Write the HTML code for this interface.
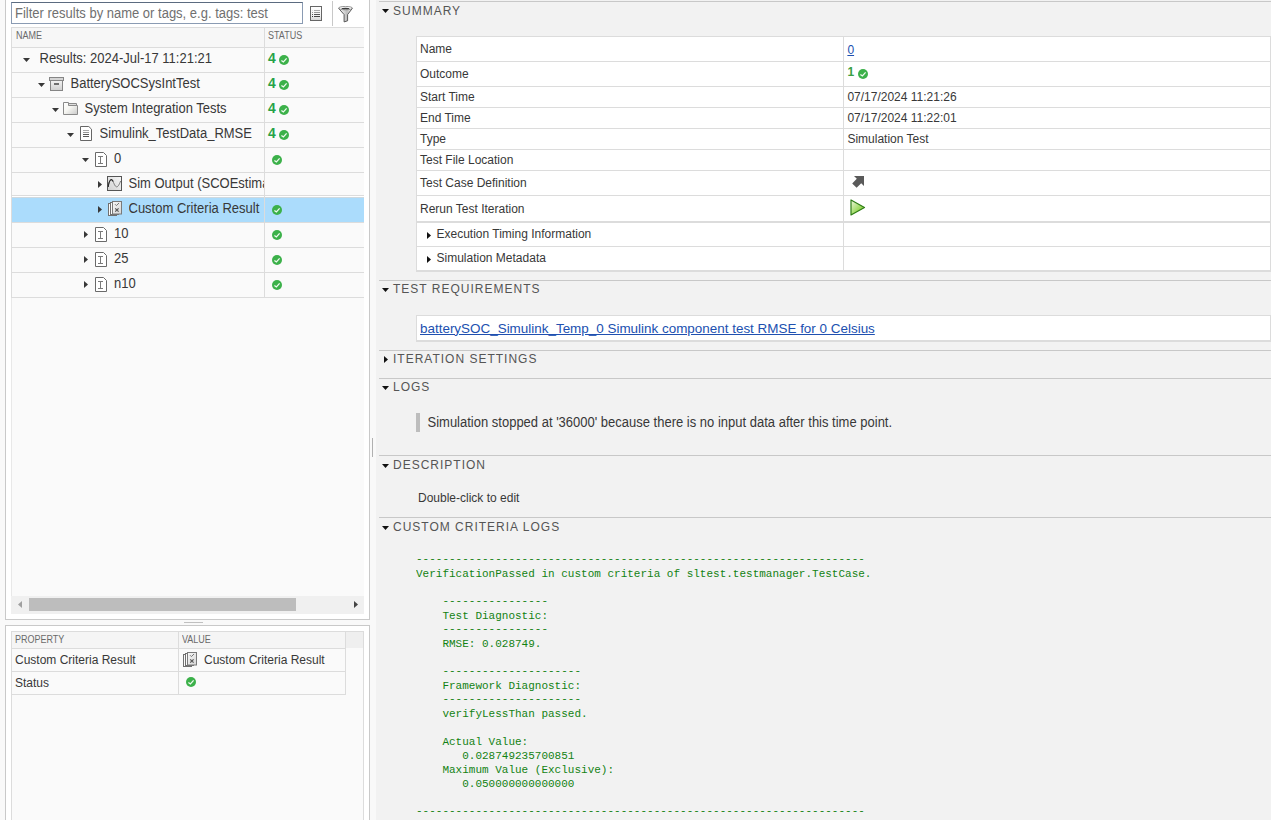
<!DOCTYPE html><html><head><meta charset="utf-8"><style>
html,body{margin:0;padding:0;}
body{width:1271px;height:820px;overflow:hidden;position:relative;background:#f9f9f9;font-family:"Liberation Sans", sans-serif;}
.t{position:absolute;white-space:pre;}
.r{position:absolute;}
</style></head><body>
<div class="r" style="left:5px;top:-1px;width:365px;height:621px;background:#ffffff;box-sizing:border-box;border:1px solid #c9c9c9;"></div>
<div class="r" style="left:11px;top:2px;width:292px;height:22px;background:#ffffff;box-sizing:border-box;border:1px solid #8a9bb3;border-top-color:#5b6b80;"></div>
<div class="t" style="left:15px;top:7.00px;font-size:13px;line-height:13px;color:#707070;font-weight:normal;font-family:'Liberation Sans', sans-serif;transform:scaleY(1.1);transform-origin:0 11.00px;">Filter results by name or tags, e.g. tags: test</div>
<svg class="r" style="left:310px;top:6px" width="12" height="15" viewBox="0 0 12 15"><defs><linearGradient id="lg1" x1="0" y1="0" x2="0" y2="1"><stop offset="0" stop-color="#ffffff"/><stop offset="0.6" stop-color="#f4f4f4"/><stop offset="1" stop-color="#d4d4d4"/></linearGradient></defs><rect x="0.5" y="0.5" width="11" height="14" fill="url(#lg1)" stroke="#666"/><rect x="2" y="4" width="1" height="1" fill="#ddd"/><rect x="4" y="4" width="6" height="1" fill="#aaa"/><rect x="2" y="6" width="1" height="1" fill="#999"/><rect x="4" y="6" width="6" height="1" fill="#999"/><rect x="2" y="8" width="1" height="1" fill="#555"/><rect x="4" y="8" width="6" height="1" fill="#555"/><rect x="2" y="10" width="1" height="1" fill="#333"/><rect x="4" y="10" width="6" height="1" fill="#444"/></svg>
<div class="r" style="left:332px;top:1px;width:1px;height:25px;background:#c8c8c8;"></div>
<svg class="r" style="left:338px;top:6px" width="16" height="17" viewBox="0 0 16 17"><defs><linearGradient id="lg2" x1="0" y1="0" x2="1" y2="0"><stop offset="0" stop-color="#ffffff"/><stop offset="0.35" stop-color="#dcdcdc"/><stop offset="0.6" stop-color="#bdbdbd"/><stop offset="1" stop-color="#f4f4f4"/></linearGradient></defs><path d="M0.7 2.4L6.1 8.6V15.9L9.6 14.8V8.6L14.3 2.4Z" fill="url(#lg2)" stroke="#4a4a4a" stroke-width="0.9" stroke-linejoin="round"/><ellipse cx="7.5" cy="2.1" rx="6.9" ry="1.7" fill="#fdfdfd" stroke="#7a7a7a" stroke-width="0.8"/><ellipse cx="7.5" cy="2.6" rx="4.1" ry="0.75" fill="#3a3a3a"/></svg>
<div class="r" style="left:11px;top:27px;width:353px;height:570px;background:#fafafa;"></div>
<div class="r" style="left:11px;top:27px;width:353px;height:20px;background:#f7f7f7;"></div>
<div class="r" style="left:11px;top:27px;width:353px;height:1px;background:#dcdcdc;"></div>
<div class="r" style="left:11px;top:27px;width:1px;height:270px;background:#dcdcdc;"></div>
<div class="r" style="left:11px;top:297px;width:1px;height:300px;background:#e8e8e8;"></div>
<div class="t" style="left:16px;top:30.93px;font-size:10px;line-height:10px;color:#6a6a6a;font-weight:normal;font-family:'Liberation Sans', sans-serif;transform:scaleX(0.9);transform-origin:0 0;">NAME</div>
<div class="t" style="left:268px;top:30.93px;font-size:10px;line-height:10px;color:#6a6a6a;font-weight:normal;font-family:'Liberation Sans', sans-serif;transform:scaleX(0.9);transform-origin:0 0;">STATUS</div>
<div class="r" style="left:11px;top:47px;width:353px;height:1px;background:#dcdcdc;"></div>
<div class="r" style="left:11px;top:72px;width:353px;height:1px;background:#dcdcdc;"></div>
<div class="r" style="left:11px;top:97px;width:353px;height:1px;background:#dcdcdc;"></div>
<div class="r" style="left:11px;top:122px;width:353px;height:1px;background:#dcdcdc;"></div>
<div class="r" style="left:11px;top:147px;width:353px;height:1px;background:#dcdcdc;"></div>
<div class="r" style="left:11px;top:172px;width:353px;height:1px;background:#dcdcdc;"></div>
<div class="r" style="left:11px;top:195px;width:353px;height:1px;background:#dcdcdc;"></div>
<div class="r" style="left:11px;top:222px;width:353px;height:1px;background:#dcdcdc;"></div>
<div class="r" style="left:11px;top:247px;width:353px;height:1px;background:#dcdcdc;"></div>
<div class="r" style="left:11px;top:272px;width:353px;height:1px;background:#dcdcdc;"></div>
<div class="r" style="left:11px;top:297px;width:353px;height:1px;background:#dcdcdc;"></div>
<div class="r" style="left:12px;top:198px;width:352px;height:24px;background:#abdcfc;"></div>
<div class="r" style="left:12px;top:197px;width:352px;height:1px;background:#cfd9df;"></div>
<div class="r" style="left:12px;top:196px;width:352px;height:1px;background:#ffffff;"></div>
<div class="r" style="left:264px;top:27px;width:1px;height:270px;background:#dcdcdc;"></div>
<svg class="r" style="left:23px;top:58px" width="7" height="4" viewBox="0 0 7 4"><path d="M0 0H7L3.5 4Z" fill="#383838"/></svg>
<div class="t" style="left:39.5px;top:48.00px;font-size:13px;line-height:21px;color:#383838;font-weight:normal;font-family:'Liberation Sans', sans-serif;width:224px;overflow:hidden;transform:scaleY(1.1);transform-origin:0 15.00px;">Results: 2024-Jul-17 11:21:21</div>
<div class="t" style="left:268px;top:51.83px;font-size:13.9px;line-height:13.9px;color:#26a248;font-weight:bold;font-family:'Liberation Sans', sans-serif;">4</div>
<svg class="r" style="left:279.0px;top:55.0px" width="10" height="10" viewBox="0 0 10 10"><circle cx="5" cy="5" r="5" fill="#3cb14a"/><path d="M2.4 5.4L4.4 6.9L7.6 3.4" stroke="#f0faf0" stroke-width="1.3" fill="none"/></svg>
<svg class="r" style="left:38px;top:83px" width="7" height="4" viewBox="0 0 7 4"><path d="M0 0H7L3.5 4Z" fill="#383838"/></svg>
<svg class="r" style="left:49px;top:77px" width="15" height="14" viewBox="0 0 15 14"><defs><linearGradient id="bx" x1="0" y1="0" x2="0" y2="1"><stop offset="0" stop-color="#f2f2f2"/><stop offset="1" stop-color="#cfcfcf"/></linearGradient></defs><rect x="0.5" y="0.5" width="14" height="3" fill="#d4d4d4" stroke="#858585"/><rect x="1.5" y="3.5" width="12" height="10" fill="url(#bx)" stroke="#858585"/><rect x="5" y="6" width="5" height="2" fill="#6e6e6e"/></svg>
<div class="t" style="left:70.5px;top:73.00px;font-size:13px;line-height:21px;color:#383838;font-weight:normal;font-family:'Liberation Sans', sans-serif;width:193px;overflow:hidden;transform:scaleY(1.1);transform-origin:0 15.00px;">BatterySOCSysIntTest</div>
<div class="t" style="left:268px;top:76.83px;font-size:13.9px;line-height:13.9px;color:#26a248;font-weight:bold;font-family:'Liberation Sans', sans-serif;">4</div>
<svg class="r" style="left:279.0px;top:80.0px" width="10" height="10" viewBox="0 0 10 10"><circle cx="5" cy="5" r="5" fill="#3cb14a"/><path d="M2.4 5.4L4.4 6.9L7.6 3.4" stroke="#f0faf0" stroke-width="1.3" fill="none"/></svg>
<svg class="r" style="left:52px;top:108px" width="7" height="4" viewBox="0 0 7 4"><path d="M0 0H7L3.5 4Z" fill="#383838"/></svg>
<svg class="r" style="left:63px;top:102px" width="16" height="13" viewBox="0 0 16 13"><defs><linearGradient id="fd" x1="0" y1="0" x2="1" y2="1"><stop offset="0" stop-color="#ffffff"/><stop offset="0.45" stop-color="#f6f6f2"/><stop offset="1" stop-color="#c8c8c8"/></linearGradient></defs><path d="M5.5 3.5V1.5H13.5V3.5Z" fill="#dedede" stroke="#8a8a8a"/><path d="M0.5 12.5V0.5H5.5V3.5H14.5V12.5Z" fill="url(#fd)" stroke="#8a8a8a"/></svg>
<div class="t" style="left:84.5px;top:98.00px;font-size:13px;line-height:21px;color:#383838;font-weight:normal;font-family:'Liberation Sans', sans-serif;width:179px;overflow:hidden;transform:scaleY(1.1);transform-origin:0 15.00px;">System Integration Tests</div>
<div class="t" style="left:268px;top:101.83px;font-size:13.9px;line-height:13.9px;color:#26a248;font-weight:bold;font-family:'Liberation Sans', sans-serif;">4</div>
<svg class="r" style="left:279.0px;top:105.0px" width="10" height="10" viewBox="0 0 10 10"><circle cx="5" cy="5" r="5" fill="#3cb14a"/><path d="M2.4 5.4L4.4 6.9L7.6 3.4" stroke="#f0faf0" stroke-width="1.3" fill="none"/></svg>
<svg class="r" style="left:67px;top:133px" width="7" height="4" viewBox="0 0 7 4"><path d="M0 0H7L3.5 4Z" fill="#383838"/></svg>
<svg class="r" style="left:80px;top:126px" width="12" height="15" viewBox="0 0 12 15"><path d="M0.5 0.5H8.8L11.5 3.2V14.5H0.5Z" fill="#fff" stroke="#666"/><path d="M3 4.5H9" stroke="#aaa"/><path d="M3 6.5H9" stroke="#999"/><path d="M3 8.5H9M3 10.5H9" stroke="#5a5a5a"/></svg>
<div class="t" style="left:99.5px;top:123.00px;font-size:13px;line-height:21px;color:#383838;font-weight:normal;font-family:'Liberation Sans', sans-serif;width:164px;overflow:hidden;transform:scaleY(1.1);transform-origin:0 15.00px;">Simulink_TestData_RMSE</div>
<div class="t" style="left:268px;top:126.83px;font-size:13.9px;line-height:13.9px;color:#26a248;font-weight:bold;font-family:'Liberation Sans', sans-serif;">4</div>
<svg class="r" style="left:279.0px;top:130.0px" width="10" height="10" viewBox="0 0 10 10"><circle cx="5" cy="5" r="5" fill="#3cb14a"/><path d="M2.4 5.4L4.4 6.9L7.6 3.4" stroke="#f0faf0" stroke-width="1.3" fill="none"/></svg>
<svg class="r" style="left:82px;top:158px" width="7" height="4" viewBox="0 0 7 4"><path d="M0 0H7L3.5 4Z" fill="#383838"/></svg>
<svg class="r" style="left:95px;top:152px" width="12" height="15" viewBox="0 0 12 15"><path d="M0.5 0.5H8.5L11.5 3.5V14.5H0.5Z" fill="#fff" stroke="#6a6a6a"/><path d="M3 4.5H8M5.5 4.5V11.5M3 11.5H8" stroke="#7a7a7a"/></svg>
<div class="t" style="left:114px;top:148.00px;font-size:13px;line-height:21px;color:#383838;font-weight:normal;font-family:'Liberation Sans', sans-serif;width:150px;overflow:hidden;transform:scaleY(1.1);transform-origin:0 15.00px;">0</div>
<svg class="r" style="left:272.0px;top:155.0px" width="10" height="10" viewBox="0 0 10 10"><circle cx="5" cy="5" r="5" fill="#3cb14a"/><path d="M2.4 5.4L4.4 6.9L7.6 3.4" stroke="#f0faf0" stroke-width="1.3" fill="none"/></svg>
<svg class="r" style="left:98px;top:181px" width="4" height="7" viewBox="0 0 4 7"><path d="M0 0V7L4 3.5Z" fill="#383838"/></svg>
<svg class="r" style="left:107px;top:176px" width="15" height="15" viewBox="0 0 15 15"><defs><linearGradient id="sm" x1="1" y1="0" x2="0" y2="1"><stop offset="0" stop-color="#f8f8f8"/><stop offset="1" stop-color="#cfcfcf"/></linearGradient></defs><rect x="0.5" y="0.5" width="14" height="14" fill="url(#sm)" stroke="#555"/><path d="M1.2 11C2 4 4.5 1.5 6.5 6.5S10.5 13.5 13.6 5" stroke="#777" stroke-width="1" fill="none"/><path d="M1.2 11C2 4 4.5 1.5 6.2 5.5" stroke="#2a2a2a" stroke-width="1.1" fill="none"/></svg>
<div class="t" style="left:128.5px;top:173.00px;font-size:13px;line-height:21px;color:#383838;font-weight:normal;font-family:'Liberation Sans', sans-serif;width:135px;overflow:hidden;transform:scaleY(1.1);transform-origin:0 15.00px;">Sim Output (SCOEstimation)</div>
<svg class="r" style="left:98px;top:206px" width="4" height="7" viewBox="0 0 4 7"><path d="M0 0V7L4 3.5Z" fill="#383838"/></svg>
<svg class="r" style="left:108px;top:201px" width="14" height="15" viewBox="0 0 14 15"><defs><linearGradient id="cr" x1="0" y1="0" x2="1" y2="1"><stop offset="0" stop-color="#f8f8f8"/><stop offset="1" stop-color="#d6d6d6"/></linearGradient></defs><rect x="0.5" y="2.5" width="8" height="12" fill="#fbfbfb" stroke="#707070"/><rect x="2.5" y="1.5" width="8" height="12" fill="#fbfbfb" stroke="#707070"/><rect x="4.5" y="0.5" width="9" height="12.5" fill="url(#cr)" stroke="#7a7a7a"/><path d="M7 3.2L8.4 4.6L11 2" stroke="#777" fill="none"/><path d="M7.2 7.4L10.6 10.6M10.6 7.4L7.2 10.6" stroke="#555" stroke-width="1.2"/></svg>
<div class="t" style="left:128.5px;top:198.00px;font-size:13px;line-height:21px;color:#383838;font-weight:normal;font-family:'Liberation Sans', sans-serif;width:135px;overflow:hidden;transform:scaleY(1.1);transform-origin:0 15.00px;">Custom Criteria Result</div>
<svg class="r" style="left:272.0px;top:205.0px" width="10" height="10" viewBox="0 0 10 10"><circle cx="5" cy="5" r="5" fill="#3cb14a"/><path d="M2.4 5.4L4.4 6.9L7.6 3.4" stroke="#f0faf0" stroke-width="1.3" fill="none"/></svg>
<svg class="r" style="left:84px;top:231px" width="4" height="7" viewBox="0 0 4 7"><path d="M0 0V7L4 3.5Z" fill="#383838"/></svg>
<svg class="r" style="left:95px;top:227px" width="12" height="15" viewBox="0 0 12 15"><path d="M0.5 0.5H8.5L11.5 3.5V14.5H0.5Z" fill="#fff" stroke="#6a6a6a"/><path d="M3 4.5H8M5.5 4.5V11.5M3 11.5H8" stroke="#7a7a7a"/></svg>
<div class="t" style="left:114px;top:223.00px;font-size:13px;line-height:21px;color:#383838;font-weight:normal;font-family:'Liberation Sans', sans-serif;width:150px;overflow:hidden;transform:scaleY(1.1);transform-origin:0 15.00px;">10</div>
<svg class="r" style="left:272.0px;top:230.0px" width="10" height="10" viewBox="0 0 10 10"><circle cx="5" cy="5" r="5" fill="#3cb14a"/><path d="M2.4 5.4L4.4 6.9L7.6 3.4" stroke="#f0faf0" stroke-width="1.3" fill="none"/></svg>
<svg class="r" style="left:84px;top:256px" width="4" height="7" viewBox="0 0 4 7"><path d="M0 0V7L4 3.5Z" fill="#383838"/></svg>
<svg class="r" style="left:95px;top:252px" width="12" height="15" viewBox="0 0 12 15"><path d="M0.5 0.5H8.5L11.5 3.5V14.5H0.5Z" fill="#fff" stroke="#6a6a6a"/><path d="M3 4.5H8M5.5 4.5V11.5M3 11.5H8" stroke="#7a7a7a"/></svg>
<div class="t" style="left:114px;top:248.00px;font-size:13px;line-height:21px;color:#383838;font-weight:normal;font-family:'Liberation Sans', sans-serif;width:150px;overflow:hidden;transform:scaleY(1.1);transform-origin:0 15.00px;">25</div>
<svg class="r" style="left:272.0px;top:255.0px" width="10" height="10" viewBox="0 0 10 10"><circle cx="5" cy="5" r="5" fill="#3cb14a"/><path d="M2.4 5.4L4.4 6.9L7.6 3.4" stroke="#f0faf0" stroke-width="1.3" fill="none"/></svg>
<svg class="r" style="left:84px;top:281px" width="4" height="7" viewBox="0 0 4 7"><path d="M0 0V7L4 3.5Z" fill="#383838"/></svg>
<svg class="r" style="left:95px;top:277px" width="12" height="15" viewBox="0 0 12 15"><path d="M0.5 0.5H8.5L11.5 3.5V14.5H0.5Z" fill="#fff" stroke="#6a6a6a"/><path d="M3 4.5H8M5.5 4.5V11.5M3 11.5H8" stroke="#7a7a7a"/></svg>
<div class="t" style="left:114px;top:273.00px;font-size:13px;line-height:21px;color:#383838;font-weight:normal;font-family:'Liberation Sans', sans-serif;width:150px;overflow:hidden;transform:scaleY(1.1);transform-origin:0 15.00px;">n10</div>
<svg class="r" style="left:272.0px;top:280.0px" width="10" height="10" viewBox="0 0 10 10"><circle cx="5" cy="5" r="5" fill="#3cb14a"/><path d="M2.4 5.4L4.4 6.9L7.6 3.4" stroke="#f0faf0" stroke-width="1.3" fill="none"/></svg>
<div class="r" style="left:11px;top:596px;width:353px;height:18px;background:#f0f0f0;"></div>
<svg class="r" style="left:18px;top:601px" width="4" height="7" viewBox="0 0 4 7"><path d="M4 0V7L0 3.5Z" fill="#a0a0a0"/></svg>
<div class="r" style="left:29px;top:598px;width:267px;height:13px;background:#bdbdbd;"></div>
<svg class="r" style="left:354px;top:601px" width="4" height="7" viewBox="0 0 4 7"><path d="M0 0V7L4 3.5Z" fill="#444"/></svg>
<div class="r" style="left:184px;top:622px;width:19px;height:1px;background:#c0c0c0;"></div>
<div class="r" style="left:5px;top:625px;width:365px;height:200px;background:#ffffff;box-sizing:border-box;border:1px solid #c9c9c9;"></div>
<div class="r" style="left:11px;top:631px;width:353px;height:200px;background:#fafafa;box-sizing:border-box;border:1px solid #dcdcdc;"></div>
<div class="r" style="left:12px;top:632px;width:334px;height:16px;background:#f5f5f5;"></div>
<div class="r" style="left:346px;top:632px;width:17px;height:16px;background:#efefef;"></div>
<div class="r" style="left:12px;top:648px;width:334px;height:1px;background:#dcdcdc;"></div>
<div class="r" style="left:12px;top:671px;width:334px;height:1px;background:#dcdcdc;"></div>
<div class="r" style="left:12px;top:694px;width:334px;height:1px;background:#dcdcdc;"></div>
<div class="r" style="left:178px;top:632px;width:1px;height:62px;background:#dcdcdc;"></div>
<div class="r" style="left:345px;top:632px;width:1px;height:62px;background:#dcdcdc;"></div>
<div class="t" style="left:15px;top:634.93px;font-size:10px;line-height:10px;color:#6a6a6a;font-weight:normal;font-family:'Liberation Sans', sans-serif;transform:scaleX(0.9);transform-origin:0 0;">PROPERTY</div>
<div class="t" style="left:182px;top:634.93px;font-size:10px;line-height:10px;color:#6a6a6a;font-weight:normal;font-family:'Liberation Sans', sans-serif;transform:scaleX(0.9);transform-origin:0 0;">VALUE</div>
<div class="t" style="left:15px;top:653.84px;font-size:12px;line-height:12px;color:#383838;font-weight:normal;font-family:'Liberation Sans', sans-serif;">Custom Criteria Result</div>
<svg class="r" style="left:183px;top:652px" width="14" height="15" viewBox="0 0 14 15"><defs><linearGradient id="cr" x1="0" y1="0" x2="1" y2="1"><stop offset="0" stop-color="#f8f8f8"/><stop offset="1" stop-color="#d6d6d6"/></linearGradient></defs><rect x="0.5" y="2.5" width="8" height="12" fill="#fbfbfb" stroke="#707070"/><rect x="2.5" y="1.5" width="8" height="12" fill="#fbfbfb" stroke="#707070"/><rect x="4.5" y="0.5" width="9" height="12.5" fill="url(#cr)" stroke="#7a7a7a"/><path d="M7 3.2L8.4 4.6L11 2" stroke="#777" fill="none"/><path d="M7.2 7.4L10.6 10.6M10.6 7.4L7.2 10.6" stroke="#555" stroke-width="1.2"/></svg>
<div class="t" style="left:204px;top:653.84px;font-size:12px;line-height:12px;color:#383838;font-weight:normal;font-family:'Liberation Sans', sans-serif;">Custom Criteria Result</div>
<div class="t" style="left:15px;top:676.84px;font-size:12px;line-height:12px;color:#383838;font-weight:normal;font-family:'Liberation Sans', sans-serif;">Status</div>
<svg class="r" style="left:186.0px;top:677.0px" width="10" height="10" viewBox="0 0 10 10"><circle cx="5" cy="5" r="5" fill="#3cb14a"/><path d="M2.4 5.4L4.4 6.9L7.6 3.4" stroke="#f0faf0" stroke-width="1.3" fill="none"/></svg>
<div class="r" style="left:372px;top:438px;width:1px;height:19px;background:#b0b0b0;"></div>
<div class="r" style="left:376px;top:0px;width:895px;height:820px;background:#f2f2f2;"></div>
<div class="r" style="left:379px;top:1px;width:892px;height:1px;background:#c8c8c8;"></div>
<svg class="r" style="left:382px;top:9px" width="7" height="4" viewBox="0 0 7 4"><path d="M0 0H7L3.5 4Z" fill="#111"/></svg>
<div class="t" style="left:393px;top:4.84px;font-size:12px;line-height:12px;color:#555;font-weight:normal;font-family:'Liberation Sans', sans-serif;letter-spacing:1px;">SUMMARY</div>
<div class="r" style="left:416px;top:36px;width:855px;height:235px;background:#ffffff;"></div>
<div class="r" style="left:416px;top:36px;width:855px;height:1px;background:#dcdcdc;"></div>
<div class="r" style="left:416px;top:36px;width:1px;height:235px;background:#dcdcdc;"></div>
<div class="r" style="left:416px;top:270px;width:855px;height:2px;background:#dcdcdc;"></div>
<div class="r" style="left:1270px;top:36px;width:1px;height:235px;background:#dcdcdc;"></div>
<div class="r" style="left:416px;top:61px;width:855px;height:1px;background:#dcdcdc;"></div>
<div class="r" style="left:416px;top:86px;width:855px;height:1px;background:#dcdcdc;"></div>
<div class="r" style="left:416px;top:107px;width:855px;height:1px;background:#dcdcdc;"></div>
<div class="r" style="left:416px;top:128px;width:855px;height:1px;background:#dcdcdc;"></div>
<div class="r" style="left:416px;top:149px;width:855px;height:1px;background:#dcdcdc;"></div>
<div class="r" style="left:416px;top:170px;width:855px;height:1px;background:#dcdcdc;"></div>
<div class="r" style="left:416px;top:195px;width:855px;height:1px;background:#dcdcdc;"></div>
<div class="r" style="left:416px;top:246px;width:855px;height:1px;background:#dcdcdc;"></div>
<div class="r" style="left:416px;top:221px;width:855px;height:2px;background:#dcdcdc;"></div>
<div class="r" style="left:843px;top:36px;width:1px;height:235px;background:#dcdcdc;"></div>
<div class="t" style="left:420px;top:42.84px;font-size:12px;line-height:12px;color:#383838;font-weight:normal;font-family:'Liberation Sans', sans-serif;">Name</div>
<div class="t" style="left:420px;top:67.84px;font-size:12px;line-height:12px;color:#383838;font-weight:normal;font-family:'Liberation Sans', sans-serif;">Outcome</div>
<div class="t" style="left:420px;top:90.84px;font-size:12px;line-height:12px;color:#383838;font-weight:normal;font-family:'Liberation Sans', sans-serif;">Start Time</div>
<div class="t" style="left:420px;top:111.84px;font-size:12px;line-height:12px;color:#383838;font-weight:normal;font-family:'Liberation Sans', sans-serif;">End Time</div>
<div class="t" style="left:420px;top:132.84px;font-size:12px;line-height:12px;color:#383838;font-weight:normal;font-family:'Liberation Sans', sans-serif;">Type</div>
<div class="t" style="left:420px;top:153.84px;font-size:12px;line-height:12px;color:#383838;font-weight:normal;font-family:'Liberation Sans', sans-serif;">Test File Location</div>
<div class="t" style="left:420px;top:176.84px;font-size:12px;line-height:12px;color:#383838;font-weight:normal;font-family:'Liberation Sans', sans-serif;">Test Case Definition</div>
<div class="t" style="left:420px;top:202.84px;font-size:12px;line-height:12px;color:#383838;font-weight:normal;font-family:'Liberation Sans', sans-serif;">Rerun Test Iteration</div>
<div class="t" style="left:847.4px;top:43.84px;font-size:12px;line-height:12px;color:#2050b0;font-weight:normal;font-family:'Liberation Sans', sans-serif;text-decoration:underline;">0</div>
<div class="t" style="left:847.4px;top:65.84px;font-size:12px;line-height:12px;color:#3aa046;font-weight:bold;font-family:'Liberation Sans', sans-serif;">1</div>
<svg class="r" style="left:858.0px;top:69.0px" width="10" height="10" viewBox="0 0 10 10"><circle cx="5" cy="5" r="5" fill="#3cb14a"/><path d="M2.4 5.4L4.4 6.9L7.6 3.4" stroke="#f0faf0" stroke-width="1.3" fill="none"/></svg>
<div class="t" style="left:847.4px;top:90.84px;font-size:12px;line-height:12px;color:#383838;font-weight:normal;font-family:'Liberation Sans', sans-serif;">07/17/2024 11:21:26</div>
<div class="t" style="left:847.4px;top:111.84px;font-size:12px;line-height:12px;color:#383838;font-weight:normal;font-family:'Liberation Sans', sans-serif;">07/17/2024 11:22:01</div>
<div class="t" style="left:847.4px;top:132.84px;font-size:12px;line-height:12px;color:#383838;font-weight:normal;font-family:'Liberation Sans', sans-serif;">Simulation Test</div>
<svg class="r" style="left:852px;top:176px" width="13" height="13" viewBox="0 0 13 13"><path d="M2 0H12V10L9.2 7.2L4.6 11.8L0.2 7.4L4.8 2.8Z" fill="#5a5a5a"/></svg>
<svg class="r" style="left:850px;top:199px" width="16" height="17" viewBox="0 0 16 17"><defs><linearGradient id="pl" x1="0" y1="0" x2="1" y2="1"><stop offset="0" stop-color="#f0f8e0"/><stop offset="0.6" stop-color="#9ad85a"/><stop offset="1" stop-color="#6cbf2a"/></linearGradient></defs><path d="M1 1V16L14.5 8.5Z" fill="url(#pl)" stroke="#2e7d16" stroke-width="1.2" stroke-linejoin="round"/></svg>
<svg class="r" style="left:427px;top:232px" width="4" height="7" viewBox="0 0 4 7"><path d="M0 0V7L4 3.5Z" fill="#111"/></svg>
<div class="t" style="left:436.5px;top:227.84px;font-size:12px;line-height:12px;color:#383838;font-weight:normal;font-family:'Liberation Sans', sans-serif;">Execution Timing Information</div>
<svg class="r" style="left:427px;top:256px" width="4" height="7" viewBox="0 0 4 7"><path d="M0 0V7L4 3.5Z" fill="#111"/></svg>
<div class="t" style="left:436.5px;top:251.84px;font-size:12px;line-height:12px;color:#383838;font-weight:normal;font-family:'Liberation Sans', sans-serif;">Simulation Metadata</div>
<div class="r" style="left:379px;top:280px;width:892px;height:1px;background:#c8c8c8;"></div>
<svg class="r" style="left:382px;top:288px" width="7" height="4" viewBox="0 0 7 4"><path d="M0 0H7L3.5 4Z" fill="#111"/></svg>
<div class="t" style="left:393px;top:282.84px;font-size:12px;line-height:12px;color:#555;font-weight:normal;font-family:'Liberation Sans', sans-serif;letter-spacing:1px;">TEST REQUIREMENTS</div>
<div class="r" style="left:416px;top:315px;width:855px;height:27px;background:#ffffff;box-sizing:border-box;border:1px solid #dcdcdc;border-bottom-width:2px;"></div>
<div class="t" style="left:420px;top:321.61px;font-size:13.45px;line-height:13.45px;color:#2050b0;font-weight:normal;font-family:'Liberation Sans', sans-serif;transform:scaleY(1);transform-origin:0 11.39px;text-decoration:underline;">batterySOC_Simulink_Temp_0 Simulink component test RMSE for 0 Celsius</div>
<div class="r" style="left:379px;top:350px;width:892px;height:1px;background:#c8c8c8;"></div>
<svg class="r" style="left:384px;top:356px" width="4" height="7" viewBox="0 0 4 7"><path d="M0 0V7L4 3.5Z" fill="#111"/></svg>
<div class="t" style="left:393px;top:352.84px;font-size:12px;line-height:12px;color:#555;font-weight:normal;font-family:'Liberation Sans', sans-serif;letter-spacing:1px;">ITERATION SETTINGS</div>
<div class="r" style="left:379px;top:378px;width:892px;height:1px;background:#c8c8c8;"></div>
<svg class="r" style="left:382px;top:386px" width="7" height="4" viewBox="0 0 7 4"><path d="M0 0H7L3.5 4Z" fill="#111"/></svg>
<div class="t" style="left:393px;top:380.84px;font-size:12px;line-height:12px;color:#555;font-weight:normal;font-family:'Liberation Sans', sans-serif;letter-spacing:1px;">LOGS</div>
<div class="r" style="left:416px;top:413px;width:4px;height:19px;background:#bdbdbd;"></div>
<div class="t" style="left:427.5px;top:416.00px;font-size:13px;line-height:13px;color:#383838;font-weight:normal;font-family:'Liberation Sans', sans-serif;transform:scaleY(1.1);transform-origin:0 11.00px;">Simulation stopped at '36000' because there is no input data after this time point.</div>
<div class="r" style="left:379px;top:455px;width:892px;height:1px;background:#c8c8c8;"></div>
<svg class="r" style="left:382px;top:464px" width="7" height="4" viewBox="0 0 7 4"><path d="M0 0H7L3.5 4Z" fill="#111"/></svg>
<div class="t" style="left:393px;top:458.84px;font-size:12px;line-height:12px;color:#555;font-weight:normal;font-family:'Liberation Sans', sans-serif;letter-spacing:1px;">DESCRIPTION</div>
<div class="t" style="left:418px;top:491.84px;font-size:12px;line-height:12px;color:#383838;font-weight:normal;font-family:'Liberation Sans', sans-serif;">Double-click to edit</div>
<div class="r" style="left:379px;top:517px;width:892px;height:1px;background:#c8c8c8;"></div>
<svg class="r" style="left:382px;top:526px" width="7" height="4" viewBox="0 0 7 4"><path d="M0 0H7L3.5 4Z" fill="#111"/></svg>
<div class="t" style="left:393px;top:520.84px;font-size:12px;line-height:12px;color:#555;font-weight:normal;font-family:'Liberation Sans', sans-serif;letter-spacing:1px;">CUSTOM CRITERIA LOGS</div>
<div class="t" style="left:416px;top:553.57px;font-size:11px;line-height:11px;color:#128212;font-weight:normal;font-family:'Liberation Mono', monospace;transform:scaleY(1.06);transform-origin:0 8.43px;">--------------------------------------------------------------------</div>
<div class="t" style="left:416px;top:568.57px;font-size:11px;line-height:11px;color:#128212;font-weight:normal;font-family:'Liberation Mono', monospace;transform:scaleY(1.06);transform-origin:0 8.43px;">VerificationPassed in custom criteria of sltest.testmanager.TestCase.</div>
<div class="t" style="left:416px;top:595.57px;font-size:11px;line-height:11px;color:#128212;font-weight:normal;font-family:'Liberation Mono', monospace;transform:scaleY(1.06);transform-origin:0 8.43px;">    ----------------</div>
<div class="t" style="left:416px;top:610.57px;font-size:11px;line-height:11px;color:#128212;font-weight:normal;font-family:'Liberation Mono', monospace;transform:scaleY(1.06);transform-origin:0 8.43px;">    Test Diagnostic:</div>
<div class="t" style="left:416px;top:623.57px;font-size:11px;line-height:11px;color:#128212;font-weight:normal;font-family:'Liberation Mono', monospace;transform:scaleY(1.06);transform-origin:0 8.43px;">    ----------------</div>
<div class="t" style="left:416px;top:638.57px;font-size:11px;line-height:11px;color:#128212;font-weight:normal;font-family:'Liberation Mono', monospace;transform:scaleY(1.06);transform-origin:0 8.43px;">    RMSE: 0.028749.</div>
<div class="t" style="left:416px;top:665.57px;font-size:11px;line-height:11px;color:#128212;font-weight:normal;font-family:'Liberation Mono', monospace;transform:scaleY(1.06);transform-origin:0 8.43px;">    ---------------------</div>
<div class="t" style="left:416px;top:680.57px;font-size:11px;line-height:11px;color:#128212;font-weight:normal;font-family:'Liberation Mono', monospace;transform:scaleY(1.06);transform-origin:0 8.43px;">    Framework Diagnostic:</div>
<div class="t" style="left:416px;top:693.57px;font-size:11px;line-height:11px;color:#128212;font-weight:normal;font-family:'Liberation Mono', monospace;transform:scaleY(1.06);transform-origin:0 8.43px;">    ---------------------</div>
<div class="t" style="left:416px;top:708.57px;font-size:11px;line-height:11px;color:#128212;font-weight:normal;font-family:'Liberation Mono', monospace;transform:scaleY(1.06);transform-origin:0 8.43px;">    verifyLessThan passed.</div>
<div class="t" style="left:416px;top:736.57px;font-size:11px;line-height:11px;color:#128212;font-weight:normal;font-family:'Liberation Mono', monospace;transform:scaleY(1.06);transform-origin:0 8.43px;">    Actual Value:</div>
<div class="t" style="left:416px;top:750.57px;font-size:11px;line-height:11px;color:#128212;font-weight:normal;font-family:'Liberation Mono', monospace;transform:scaleY(1.06);transform-origin:0 8.43px;">       0.028749235700851</div>
<div class="t" style="left:416px;top:764.57px;font-size:11px;line-height:11px;color:#128212;font-weight:normal;font-family:'Liberation Mono', monospace;transform:scaleY(1.06);transform-origin:0 8.43px;">    Maximum Value (Exclusive):</div>
<div class="t" style="left:416px;top:778.57px;font-size:11px;line-height:11px;color:#128212;font-weight:normal;font-family:'Liberation Mono', monospace;transform:scaleY(1.06);transform-origin:0 8.43px;">       0.050000000000000</div>
<div class="t" style="left:416px;top:805.57px;font-size:11px;line-height:11px;color:#128212;font-weight:normal;font-family:'Liberation Mono', monospace;transform:scaleY(1.06);transform-origin:0 8.43px;">--------------------------------------------------------------------</div>
</body></html>
